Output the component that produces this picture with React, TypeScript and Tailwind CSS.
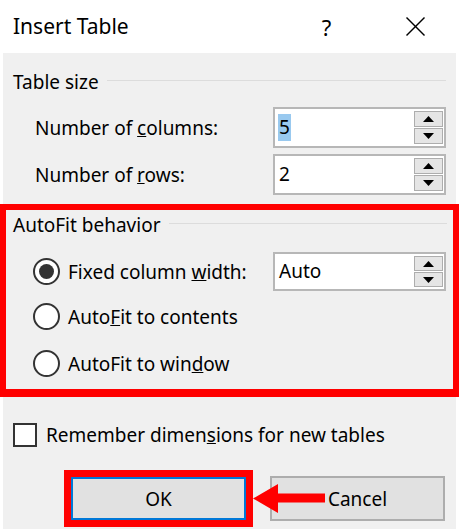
import React from "react";

const font = { fontFamily: '"Noto Sans", "Open Sans", sans-serif' };

function Tri({ up }: { up: boolean }) {
  return (
    <svg width="11" height="6" viewBox="0 0 11 6">
      {up ? <polygon points="0,6 11,6 5.5,0" fill="#000" /> : <polygon points="0,0 11,0 5.5,6" fill="#000" />}
    </svg>
  );
}

function Spin({ children, h = "h-[41px]" }: { children: React.ReactNode; h?: string }) {
  return (
    <div className={`w-[173px] ${h} border-2 border-[#b7b7b7] bg-white flex items-stretch`}>
      <div className="flex-1 flex items-center pl-[3px] text-[19px] leading-none">{children}</div>
      <div className="w-[29px] flex flex-col gap-[1px] py-[2px] mr-[1px]">
        <div className="flex-1 border border-[#adadad] bg-[#e5e5e5] flex items-center justify-center">
          <Tri up />
        </div>
        <div className="flex-1 border border-[#adadad] bg-[#e5e5e5] flex items-center justify-center">
          <Tri up={false} />
        </div>
      </div>
    </div>
  );
}

function Radio({ checked }: { checked?: boolean }) {
  return (
    <div className="w-[27px] h-[27px] rounded-full border-2 border-[#333333] bg-white flex items-center justify-center shrink-0">
      {checked && <div className="w-[15px] h-[15px] rounded-full bg-[#333333]" />}
    </div>
  );
}

export default function App() {
  return (
    <div className="w-[459px] h-[529px] bg-white overflow-hidden text-black" style={font}>
      <div className="h-[53px] flex items-center pl-[13px]">
        <span className="text-[21px] leading-none">Insert Table</span>
        <span className="ml-[193px] text-[22px] leading-none">?</span>
        <svg className="ml-[75px]" width="19" height="19" viewBox="0 0 19 19">
          <line x1="0.5" y1="0.5" x2="18.5" y2="18.5" stroke="#000" strokeWidth="1.4" />
          <line x1="18.5" y1="0.5" x2="0.5" y2="18.5" stroke="#000" strokeWidth="1.4" />
        </svg>
      </div>
      <div className="mx-[3px] h-[476px] bg-[#f0f0f0] flex flex-col text-[19px] leading-[24px]">
        <div className="flex items-center pl-[10px] pr-[10px] pt-[17px]">
          <span>Table size</span>
          <div className="flex-1 h-px bg-[#dcdcdc] ml-[8px] -mt-[3px]" />
        </div>
        <div className="flex items-center mt-[13px] pl-[32px] pr-[10px]">
          <span className="flex-1">
            Number of <u>c</u>olumns:
          </span>
          <Spin>
            <span className="bg-[#99c9ef] px-[1px] py-[4px]">5</span>
          </Spin>
        </div>
        <div className="flex items-center mt-[6px] pl-[32px] pr-[10px]">
          <span className="flex-1">
            Number of <u>r</u>ows:
          </span>
          <Spin>
            <span className="px-[1px]">2</span>
          </Spin>
        </div>
        <div className="-mx-[3px] mt-[9px] border-[6px] border-b-[8px] border-[#ff0000] flex flex-col">
          <div className="flex items-center pl-[7px] pr-[6px] pt-[3px]">
            <span>AutoFit behavior</span>
            <div className="flex-1 h-px bg-[#dcdcdc] ml-[8px] -mt-[3px]" />
          </div>
          <div className="flex items-center mt-[15px] pl-[27px] pr-[7px]">
            <Radio checked />
            <span className="flex-1 ml-[8px]">
              Fixed column <u>w</u>idth:
            </span>
            <Spin h="h-[39px]">
              <span className="px-[1px]">Auto</span>
            </Spin>
          </div>
          <div className="flex items-center mt-[12px] pl-[27px]">
            <Radio />
            <span className="ml-[8px]">
              Auto<u>F</u>it to contents
            </span>
          </div>
          <div className="flex items-center mt-[20px] pl-[27px] pb-[12px]">
            <Radio />
            <span className="ml-[8px]">
              AutoFit to win<u>d</u>ow
            </span>
          </div>
        </div>
        <div className="flex items-center mt-[26px] pl-[10px]">
          <div className="w-[24px] h-[24px] border-2 border-[#333333] bg-white" />
          <span className="ml-[9px]">
            Remember dimen<u>s</u>ions for new tables
          </span>
        </div>
        <div className="relative flex items-center mt-[23px] pl-[61px]">
          <div className="border-[7px] border-[#ff0000]">
            <div className="w-[175px] h-[43px] border-2 border-[#0078d7] bg-[#e1e1e1] flex items-center justify-center">
              OK
            </div>
          </div>
          <div className="ml-[17px] w-[175px] h-[45px] border-2 border-[#adadad] bg-[#e1e1e1] flex items-center justify-center">
            Cancel
          </div>
          <svg className="absolute left-[250px] top-[14px]" width="72" height="30" viewBox="0 0 72 30">
            <polygon points="0,14.5 25,0 25,9.5 72,9.5 72,18.5 25,18.5 25,29" fill="#ff0000" />
          </svg>
        </div>
      </div>
    </div>
  );
}
